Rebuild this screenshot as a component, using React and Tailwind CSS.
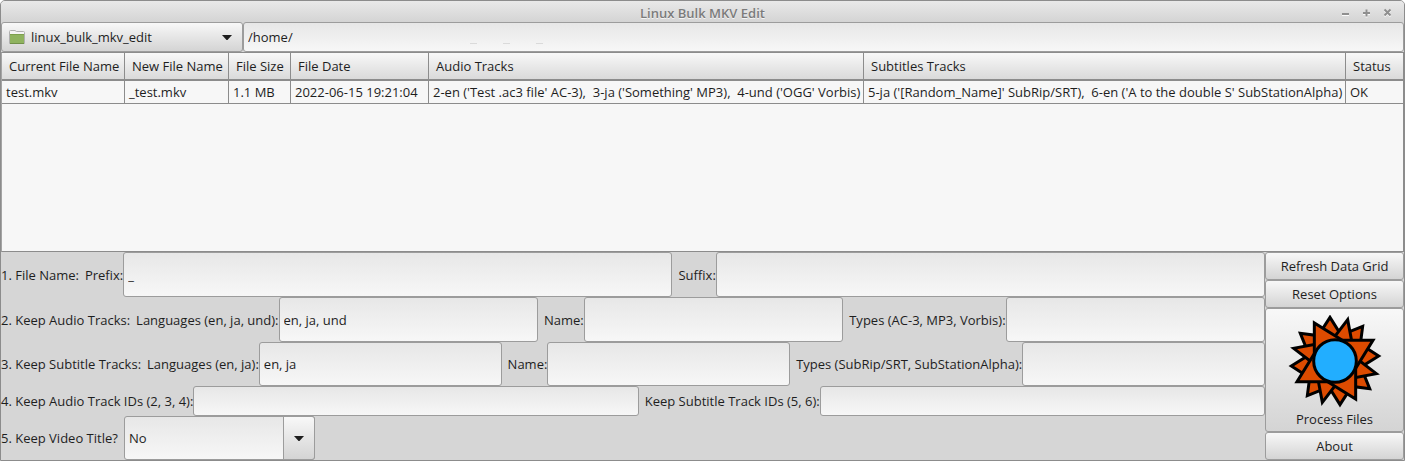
import { Fragment } from "react";

const columns = [
  { title: "Current File Name", width: "w-[123px]", value: "test.mkv" },
  { title: "New File Name", width: "w-[104px]", value: "_test.mkv" },
  { title: "File Size", width: "w-[62px]", value: "1.1 MB" },
  { title: "File Date", width: "w-[138px]", value: "2022-06-15 19:21:04" },
  {
    title: "Audio Tracks",
    width: "w-[435px]",
    value: "2-en ('Test .ac3 file' AC-3),  3-ja ('Something' MP3),  4-und ('OGG' Vorbis)",
  },
  {
    title: "Subtitles Tracks",
    width: "w-[482px]",
    value: "5-ja ('[Random_Name]' SubRip/SRT),  6-en ('A to the double S' SubStationAlpha)",
  },
  { title: "Status", width: "", value: "OK" },
];

const rows = [
  {
    height: "h-[45px]",
    title: "1. File Name:",
    fields: [
      { id: "prefix", label: "Prefix:", value: "_" },
      { id: "suffix", label: "Suffix:", value: "" },
    ],
  },
  {
    height: "h-[45px]",
    title: "2. Keep Audio Tracks:",
    fields: [
      { id: "audio-languages", label: "Languages (en, ja, und):", value: "en, ja, und" },
      { id: "audio-name", label: "Name:", value: "" },
      { id: "audio-types", label: "Types (AC-3, MP3, Vorbis):", value: "" },
    ],
  },
  {
    height: "h-11",
    title: "3. Keep Subtitle Tracks:",
    fields: [
      { id: "sub-languages", label: "Languages (en, ja):", value: "en, ja" },
      { id: "sub-name", label: "Name:", value: "" },
      { id: "sub-types", label: "Types (SubRip/SRT, SubStationAlpha):", value: "" },
    ],
  },
  {
    height: "h-[30px]",
    title: "",
    fields: [
      { id: "audio-ids", label: "4. Keep Audio Track IDs (2, 3, 4):", value: "" },
      { id: "sub-ids", label: "Keep Subtitle Track IDs (5, 6):", value: "" },
    ],
  },
];

const inputStyle =
  "rounded-[3px] border border-[#9c9c9c] bg-linear-to-b from-[#e7e7e7] to-[#f7f7f7] px-1 text-[#1e1e1e] outline-none";
const buttonStyle =
  "rounded-[3px] border border-[#9c9c9c] bg-linear-to-b from-[#f8f8f8] to-[#d4d4d4] text-[#1e1e1e]";

const quarterTurns = [0, 90, 180, 270];
const rays = [
  "-15,-131 -53,-72 22,-72",
  "83,-104 36,-85 45,-50 76,-50",
  "38,-124 -14,-56 51,-55",
  "-62,-114 -62,-10 22,-62",
];

function Sun() {
  return (
    <svg viewBox="-141 -138 282 282" className="size-[94px]" aria-hidden="true">
      <g fill="#dd4b00" stroke="#000" strokeWidth="9" strokeMiterlimit="8">
        {rays.map((points) => (
          <Fragment key={points}>
            {quarterTurns.map((angle) => (
              <polygon key={angle} points={points} transform={`rotate(${angle})`} />
            ))}
          </Fragment>
        ))}
        <circle r="64" fill="#22aeff" />
      </g>
    </svg>
  );
}

function Folder() {
  return (
    <svg viewBox="0 0 16 14" className="h-3.5 w-4 shrink-0" aria-hidden="true">
      <path d="M.5 13.500V1.500Q.5.5 1.500.5H6L7.500 1.500H14.500Q15.500 1.500 15.500 2.500V13.500Z" fill="#f4f4f4" stroke="#b0b0b0" />
      <path d="M1 5H15V13H1Z" fill="#8fb35f" />
      <path d="M1 4.500H15" stroke="#7da04d" />
      <path d="M1 13.500H15" stroke="#71904a" />
    </svg>
  );
}

function Arrow() {
  return (
    <svg viewBox="0 0 10 5" className="h-[5px] w-2.5 shrink-0" aria-hidden="true">
      <path d="M0 0H10L5.500 5H4.500Z" fill="#1e1e1e" />
    </svg>
  );
}

const controls = [
  { name: "Minimize", d: "M1 6H8" },
  { name: "Maximize", d: "M1 5H8M4.500 1.500V8.500" },
  { name: "Close", d: "M1.500 1.500L7.500 7.500M7.500 1.500L1.500 7.500" },
];

export default function App() {
  return (
    <div className="bg-white">
      <div className="flex min-h-screen flex-col rounded-t-[5px] border border-[#8c8c8c] bg-[#d6d6d6] font-['Open_Sans','Noto_Sans',sans-serif] text-[13px] leading-5 text-[#1e1e1e]">
        <header className="grid h-[21px] grid-cols-[1fr_auto_1fr] items-center rounded-t-[4px] bg-linear-to-b from-[#e9e9e9] to-[#d4d4d4]">
          <h1 className="col-start-2 pt-0.5 font-semibold text-[#7b7b7b] [text-shadow:0_1px_0_#f4f4f4]">
            Linux Bulk MKV Edit
          </h1>
          <div className="flex justify-end gap-3 pt-0.5 pr-3">
            {controls.map((c) => (
              <button key={c.name} type="button" aria-label={c.name}>
                <svg viewBox="0 0 9 10" className="h-2.5 w-[9px]" aria-hidden="true">
                  <path d={c.d} stroke="#fafafa" strokeWidth="2" transform="translate(0 1)" />
                  <path d={c.d} stroke="#8f8f8f" strokeWidth="2" />
                </svg>
              </button>
            ))}
          </div>
        </header>

        <div className="flex h-[30px]">
          <button type="button" className={`flex w-[242px] items-center gap-1.5 pr-2.5 pl-[7px] ${buttonStyle}`}>
            <Folder />
            <span className="flex-1 text-left">linux_bulk_mkv_edit</span>
            <Arrow />
          </button>
          <div className="grid flex-1">
            <input
              type="text"
              aria-label="Folder path"
              defaultValue="/home/"
              className={`col-start-1 row-start-1 w-full min-w-0 ${inputStyle}`}
            />
            <div className="pointer-events-none col-start-1 row-start-1 flex gap-[26px] self-end pb-2 pl-[227px]">
              <span className="h-px w-[7px] bg-[#dadada]" />
              <span className="h-px w-[7px] bg-[#dadada]" />
              <span className="h-px w-[7px] bg-[#dadada]" />
            </div>
          </div>
        </div>

        <div className="flex-1 overflow-hidden border border-[#8c8c8c] border-l-[#a4a4a4] bg-[#f7f7f7]">
          <table className="w-full table-fixed border-separate border-spacing-0">
            <thead>
              <tr className="h-7">
                {columns.map((c) => (
                  <th
                    key={c.title}
                    scope="col"
                    className={`border-r border-b-2 border-[#8c8c8c] bg-linear-to-b from-[#f8f8f8] to-[#dadada] px-[7px] text-left font-normal whitespace-nowrap last:border-r-0 ${c.width}`}
                  >
                    {c.title}
                  </th>
                ))}
              </tr>
            </thead>
            <tbody>
              <tr className="h-[23px]">
                {columns.map((c) => (
                  <td
                    key={c.title}
                    className="border-r border-b border-[#8c8c8c] pl-1 whitespace-pre last:border-r-0"
                  >
                    {c.value}
                  </td>
                ))}
              </tr>
            </tbody>
          </table>
        </div>

        <div className="flex">
          <form className="min-w-0 flex-1">
            {rows.map((row) => (
              <div key={row.fields[0].id} className={`flex items-stretch gap-1.5 ${row.height}`}>
                {row.title && <span className="shrink-0 self-center">{row.title}</span>}
                {row.fields.map((f) => (
                  <div key={f.id} className="flex flex-auto items-stretch">
                    <label htmlFor={f.id} className="shrink-0 self-center">
                      {f.label}
                    </label>
                    <input
                      id={f.id}
                      type="text"
                      defaultValue={f.value}
                      className={`w-0 min-w-0 flex-1 ${inputStyle}`}
                    />
                  </div>
                ))}
              </div>
            ))}
            <div className="flex h-11 items-stretch gap-1.5">
              <label htmlFor="keep-title" className="shrink-0 self-center">
                5. Keep Video Title?
              </label>
              <div className="grid w-[191px]">
                <select
                  id="keep-title"
                  defaultValue="No"
                  className={`col-start-1 row-start-1 appearance-none ${inputStyle}`}
                >
                  <option>No</option>
                  <option>Yes</option>
                </select>
                <span
                  className={`pointer-events-none col-start-1 row-start-1 flex w-8 items-center justify-center justify-self-end rounded-l-none ${buttonStyle}`}
                >
                  <Arrow />
                </span>
              </div>
            </div>
          </form>

          <div className="flex w-[139px] flex-col">
            <button type="button" className={`h-7 ${buttonStyle}`}>
              Refresh Data Grid
            </button>
            <button type="button" className={`h-7 ${buttonStyle}`}>
              Reset Options
            </button>
            <button type="button" className={`flex flex-1 flex-col items-center justify-center pt-1 ${buttonStyle}`}>
              <Sun />
              <span>Process Files</span>
            </button>
            <button type="button" className={`h-7 ${buttonStyle}`}>
              About
            </button>
          </div>
        </div>
      </div>
    </div>
  );
}
